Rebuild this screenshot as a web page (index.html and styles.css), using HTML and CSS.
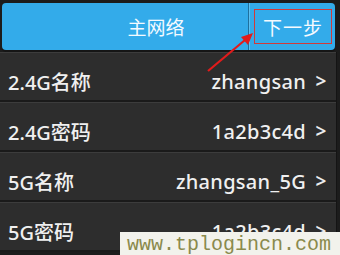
FILE: index.html
```html
<!DOCTYPE html>
<html>
<head>
<meta charset="utf-8">
<link rel="stylesheet" href="styles.css">
</head>
<body>
<div class="screen">
  <div class="header">
    <div class="title">主网络</div>
    <div class="next-wrap"><div class="next">下一步</div></div>
  </div>
  <div class="list">
    <div class="row"><span class="label">2.4G名称</span><span class="value">zhangsan</span><span class="chev">&gt;</span></div>
    <div class="row"><span class="label">2.4G密码</span><span class="value">1a2b3c4d</span><span class="chev">&gt;</span></div>
    <div class="row"><span class="label">5G名称</span><span class="value">zhangsan_5G</span><span class="chev">&gt;</span></div>
    <div class="row"><span class="label">5G密码</span><span class="value">1a2b3c4d</span><span class="chev">&gt;</span></div>
  </div>
  <svg class="arrow" width="340" height="255" viewBox="0 0 340 255">
    <line x1="208" y1="71" x2="245" y2="40" stroke="#e21b1b" stroke-width="2.2"/>
    <polygon points="253,33 241,37 248,45" fill="#e21b1b"/>
  </svg>
  <div class="watermark">www.tplogincn.com</div>
</div>
</body>
</html>
```
FILE: styles.css
```css
html, body {
  margin: 0;
  padding: 0;
  background: #1c1c1c;
}
.screen {
  position: relative;
  width: 340px;
  height: 255px;
  overflow: hidden;
  background: #1c1c1c;
  font-family: "Noto Sans", "Noto Sans CJK SC", sans-serif;
}
.header {
  margin: 3px 5px 0 2px;
  height: 47px;
  background: #33abea;
  border-radius: 4px;
  display: flex;
  align-items: stretch;
  box-shadow: 0 2px 0 #151515;
}
.title {
  flex: 1;
  display: flex;
  align-items: center;
  justify-content: center;
  padding-left: 62px;
  color: #f4faff;
  font-size: 19px;
}
.next-wrap {
  width: 84px;
  border-left: 1px solid #1f6f9c;
  box-shadow: inset 1px 0 0 #5cc0f2;
  display: flex;
  align-items: center;
  justify-content: center;
  padding-left: 2px;
}
.next {
  width: 76px;
  height: 33px;
  border: 1px solid #d2393a;
  display: flex;
  align-items: center;
  justify-content: center;
  color: #f4faff;
  font-size: 19px;
  letter-spacing: 1px;
}
.list {
  margin-top: 2px;
  width: 336px;
  border-right: 1px solid #141414;
}
.row {
  height: 38px;
  padding-top: 10px;
  background: #2d2d2d;
  border-bottom: 2px solid #1a1a1a;
  box-shadow: inset 0 1px 0 #3c3c3c;
  display: flex;
  align-items: center;
  color: #f0f0f0;
  font-size: 20px;
  font-weight: 500;
}
.label {
  padding-left: 8px;
  flex: 1;
}
.value {
  letter-spacing: 0.3px;
}
.chev {
  width: 30px;
  text-align: center;
  font-size: 19px;
  font-weight: 600;
  color: #ececec;
}
.arrow {
  position: absolute;
  left: 0;
  top: 0;
}
.watermark {
  position: absolute;
  left: 120px;
  top: 232px;
  width: 220px;
  height: 23px;
  background: #f2f2ec;
  color: #8a8a4c;
  font-family: "Liberation Mono", monospace;
  font-size: 20px;
  line-height: 26px;
  padding-left: 7px;
  box-sizing: border-box;
  white-space: nowrap;
}
```
